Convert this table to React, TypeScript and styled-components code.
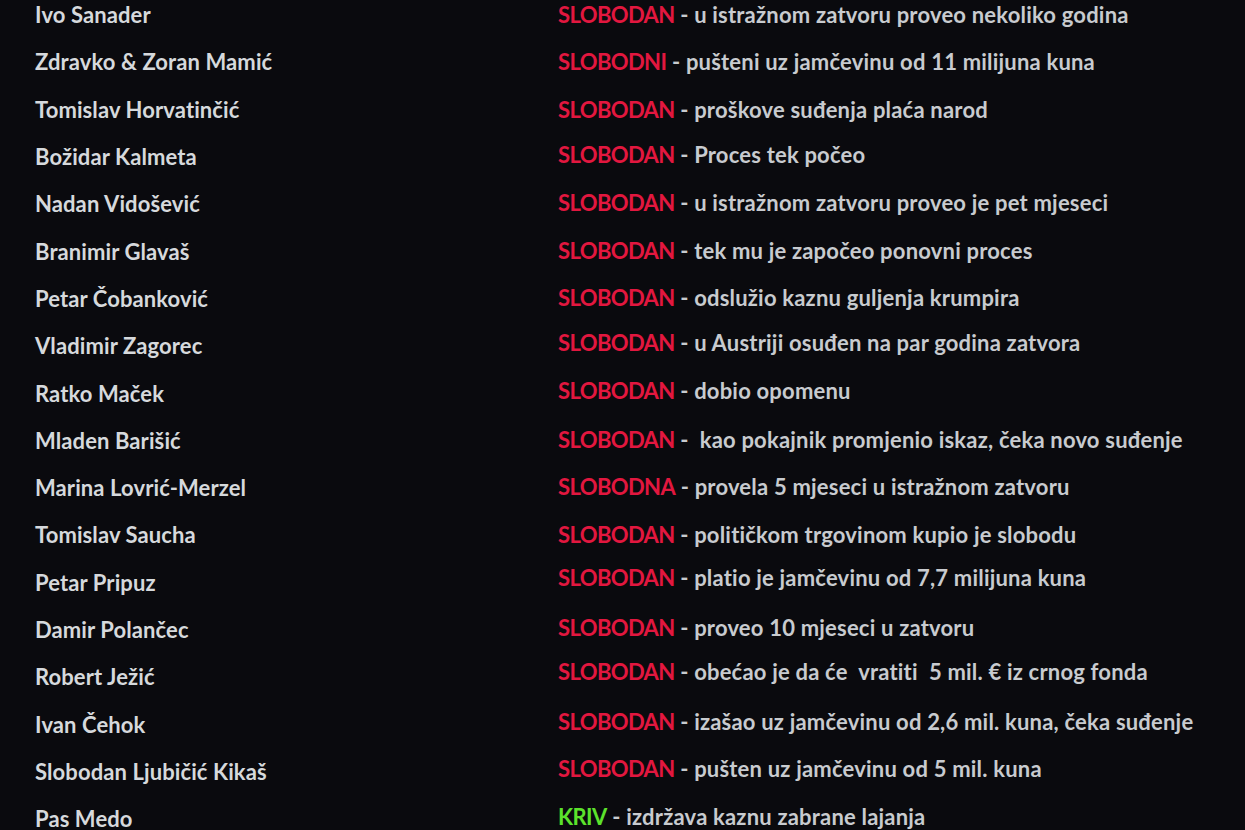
import styled, { createGlobalStyle } from "styled-components";

type Row = {
  name: string;
  status: string;
  note: string;
  guilty?: boolean;
  shift?: number;
};

const rows: Row[] = [
  { name: "Ivo Sanader", status: "SLOBODAN", note: "u istražnom zatvoru proveo nekoliko godina" },
  { name: "Zdravko & Zoran Mamić", status: "SLOBODNI", note: "pušteni uz jamčevinu od 11 milijuna kuna" },
  { name: "Tomislav Horvatinčić", status: "SLOBODAN", note: "proškove suđenja plaća narod" },
  { name: "Božidar Kalmeta", status: "SLOBODAN", note: "Proces tek počeo", shift: -2 },
  { name: "Nadan Vidošević", status: "SLOBODAN", note: "u istražnom zatvoru proveo je pet mjeseci", shift: -1 },
  { name: "Branimir Glavaš", status: "SLOBODAN", note: "tek mu je započeo ponovni proces", shift: -1 },
  { name: "Petar Čobanković", status: "SLOBODAN", note: "odslužio kaznu guljenja krumpira", shift: -1 },
  { name: "Vladimir Zagorec", status: "SLOBODAN", note: "u Austriji osuđen na par godina zatvora", shift: -3 },
  { name: "Ratko Maček", status: "SLOBODAN", note: "dobio opomenu", shift: -3 },
  { name: "Mladen Barišić", status: "SLOBODAN", note: "\u00a0kao pokajnik promjenio iskaz, čeka novo suđenje", shift: -1 },
  { name: "Marina Lovrić-Merzel", status: "SLOBODNA", note: "provela 5 mjeseci u istražnom zatvoru", shift: -1 },
  { name: "Tomislav Saucha", status: "SLOBODAN", note: "političkom trgovinom kupio je slobodu" },
  { name: "Petar Pripuz", status: "SLOBODAN", note: "platio je jamčevinu od 7,7 milijuna kuna", shift: -5 },
  { name: "Damir Polančec", status: "SLOBODAN", note: "proveo 10 mjeseci u zatvoru", shift: -2 },
  { name: "Robert Ježić", status: "SLOBODAN", note: "obećao je da će\u00a0 vratiti\u00a0 5 mil. € iz crnog fonda", shift: -5 },
  { name: "Ivan Čehok", status: "SLOBODAN", note: "izašao uz jamčevinu od 2,6 mil. kuna, čeka suđenje", shift: -3 },
  { name: "Slobodan Ljubičić Kikaš", status: "SLOBODAN", note: "pušten uz jamčevinu od 5 mil. kuna", shift: -3 },
  { name: "Pas Medo", status: "KRIV", note: "izdržava kaznu zabrane lajanja", guilty: true, shift: -2 },
];

const GlobalStyle = createGlobalStyle`
  html, body {
    margin: 0;
    padding: 0;
    background: #0a0a0e;
    overflow: hidden;
  }
  body {
    font-family: Lato, "Open Sans", "Liberation Sans", sans-serif;
  }
`;

const App = () => (
  <>
    <GlobalStyle />
    <SPage>
      <SList>
        {rows.map((r) => (
          <SRow key={r.name}>
            <SName>{r.name}</SName>
            <SVerdict style={r.shift ? { transform: `translateY(${r.shift}px)` } : undefined}>
              <SStatus $guilty={r.guilty}>{r.status}</SStatus> - {r.note}
            </SVerdict>
          </SRow>
        ))}
      </SList>
    </SPage>
  </>
);

export default App;

const SPage = styled.div`
  width: 1245px;
  height: 830px;
  background: #0a0a0e;
  overflow: hidden;
`;

const SList = styled.div`
  display: grid;
  grid-auto-rows: 47.3px;
  margin-top: -9px;
  padding-left: 35px;
`;

const SRow = styled.div`
  display: grid;
  grid-template-columns: 523px 1fr;
  align-items: center;
  font-size: 22px;
  font-weight: 700;
  white-space: pre;
`;

const SName = styled.div`
  color: #d6d9dc;
  letter-spacing: 0.1px;
`;

const SVerdict = styled.div`
  color: #c8cbcf;
  letter-spacing: 0.2px;
`;

const SStatus = styled.span<{ $guilty?: boolean }>`
  color: ${(p) => (p.$guilty ? "#5ce22c" : "#e2173f")};
  letter-spacing: -0.6px;
`;
